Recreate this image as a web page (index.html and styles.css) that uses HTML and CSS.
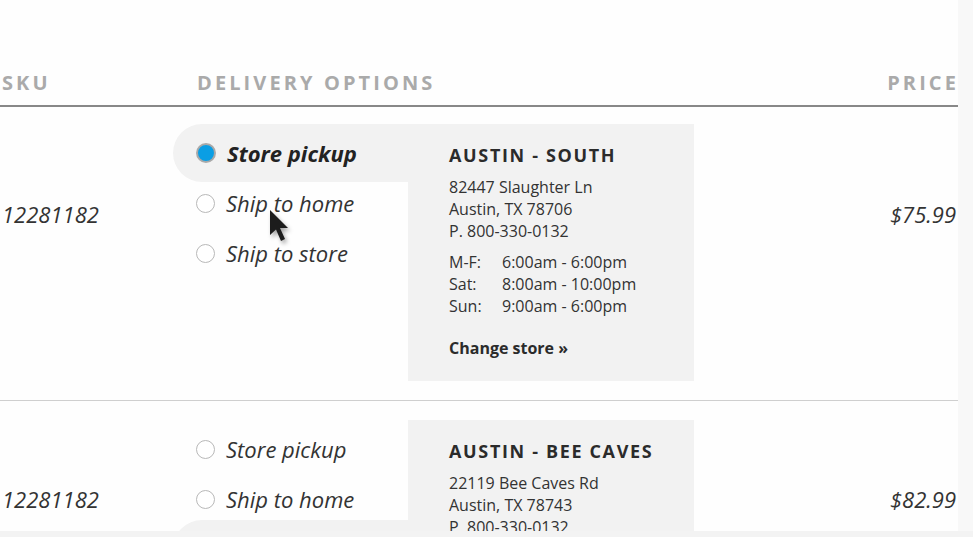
FILE: index.html
```html
<!DOCTYPE html>
<html lang="en">
<head>
<meta charset="utf-8">
<title>Delivery options</title>
<link rel="stylesheet" href="styles.css">
</head>
<body>
<div class="viewport">
  <div class="page">
    <div class="table">
      <div class="thead">
        <div class="th th-sku">SKU</div>
        <div class="th th-delivery">DELIVERY OPTIONS</div>
        <div class="th th-price">PRICE</div>
      </div>

      <div class="row row-one">
        <div class="cell-sku">12281182</div>
        <div class="cell-delivery">
          <ul class="options">
            <li class="option is-selected"><span class="radio"></span><span class="label">Store pickup</span></li>
            <li class="option"><span class="radio"></span><span class="label">Ship to home</span></li>
            <li class="option"><span class="radio"></span><span class="label">Ship to store</span></li>
          </ul>
          <div class="store">
            <h3 class="store-name">AUSTIN - SOUTH</h3>
            <p class="store-addr">82447 Slaughter Ln<br>Austin, TX 78706<br>P. 800-330-0132</p>
            <div class="hours">
              <span>M-F:</span><span>6:00am - 6:00pm</span>
              <span>Sat:</span><span>8:00am - 10:00pm</span>
              <span>Sun:</span><span>9:00am - 6:00pm</span>
            </div>
            <a class="change">Change store »</a>
          </div>
        </div>
        <div class="cell-price">$75.99</div>
      </div>

      <div class="row row-two">
        <div class="cell-sku">12281182</div>
        <div class="cell-delivery">
          <ul class="options">
            <li class="option"><span class="radio"></span><span class="label">Store pickup</span></li>
            <li class="option"><span class="radio"></span><span class="label">Ship to home</span></li>
            <li class="option is-selected-soft"><span class="radio"></span><span class="label">Ship to store</span></li>
          </ul>
          <div class="store">
            <h3 class="store-name">AUSTIN - BEE CAVES</h3>
            <p class="store-addr">22119 Bee Caves Rd<br>Austin, TX 78743<br>P. 800-330-0132</p>
            <div class="hours">
              <span>M-F:</span><span>6:00am - 6:00pm</span>
              <span>Sat:</span><span>8:00am - 10:00pm</span>
              <span>Sun:</span><span>9:00am - 6:00pm</span>
            </div>
            <a class="change">Change store »</a>
          </div>
        </div>
        <div class="cell-price">$82.99</div>
      </div>
    </div>

    <svg class="cursor" width="26" height="38" viewBox="0 0 26 38" aria-hidden="true">
      <path d="M2 2 L2 27 L8 21.5 L13 33 L17 31 L12 20 L20 20 Z" fill="#1c1c1c"/>
    </svg>
  </div>
</div>
</body>
</html>
```

FILE: styles.css
```css
html, body {
  margin: 0;
  padding: 0;
}

body {
  background: #f3f3f3;
  font-family: "Open Sans", "Liberation Sans", sans-serif;
  color: #333;
}

.viewport {
  height: 531px;
  overflow: hidden;
  background: #f8f8f8;
}

.page {
  position: relative;
  width: 958px;
  height: 531px;
  background: #fefefe;
  overflow: hidden;
}

.table {
  padding: 0 2px;
}

.thead {
  display: flex;
  align-items: center;
  padding: 69px 2px 8px;
  margin: 0 -2px;
  border-bottom: 2px solid #888;
}

.th {
  font-size: 20px;
  line-height: 28px;
  font-weight: 700;
  letter-spacing: 3.1px;
  color: #aaa;
}

.th-sku {
  width: 195px;
}

.th-delivery {
  flex: 1;
}

.th-price {
  margin-right: -3px;
}

.row {
  display: flex;
  align-items: flex-start;
  margin: 0 -2px;
  padding: 0 2px;
}

.row-one {
  padding-top: 17px;
  padding-bottom: 19px;
  border-bottom: 1px solid #cfcfcf;
}

.row-two {
  padding-top: 19px;
}

.cell-sku,
.cell-price {
  font-size: 22px;
  line-height: 28px;
  font-style: italic;
  color: #333;
}

.cell-sku {
  width: 171px;
}

.row-one .cell-sku,
.row-one .cell-price {
  margin-top: 76px;
}

.row-two .cell-sku,
.row-two .cell-price {
  margin-top: 65px;
}

.cell-price {
  margin-left: auto;
}

.cell-delivery {
  display: flex;
  align-items: flex-start;
}

.options {
  list-style: none;
  margin: 0;
  padding: 0;
  width: 235px;
}

.option {
  display: flex;
  align-items: center;
  gap: 11px;
  height: 58px;
  margin-bottom: -8px;
  padding-left: 23px;
  border-radius: 29px 0 0 29px;
  font-size: 22px;
  font-style: italic;
  color: #333;
}

.option.is-selected {
  background: #f2f2f2;
  font-weight: 700;
  color: #222;
}

.option.is-selected-soft {
  background: #f2f2f2;
}

.radio {
  box-sizing: border-box;
  width: 19px;
  height: 19px;
  border-radius: 50%;
  border: 1.6px solid #b8b8b8;
  background: #fff;
  flex: none;
}

.is-selected .radio {
  width: 20px;
  height: 20px;
  border: 2px solid #a9a9a9;
  background: #0a9ee4;
}

.label {
  line-height: 30px;
}

.store {
  width: 286px;
  box-sizing: border-box;
  padding: 20px 16px 22px 41px;
  background: #f2f2f2;
}

.store-name {
  margin: 0;
  font-size: 18px;
  line-height: 22px;
  font-weight: 700;
  letter-spacing: 1.65px;
  color: #2b2b2b;
}

.store-addr {
  margin: 10px 0 0;
  font-size: 16px;
  line-height: 22px;
  color: #333;
}

.hours {
  display: grid;
  grid-template-columns: 53px auto;
  margin-top: 9px;
  font-size: 16px;
  line-height: 22px;
  color: #333;
}

.change {
  display: block;
  margin-top: 20px;
  font-size: 16px;
  line-height: 22px;
  font-weight: 700;
  color: #2b2b2b;
}

.cursor {
  position: absolute;
  left: 268px;
  top: 208px;
  filter: drop-shadow(2px 3px 2px rgba(0, 0, 0, 0.35));
}
```
